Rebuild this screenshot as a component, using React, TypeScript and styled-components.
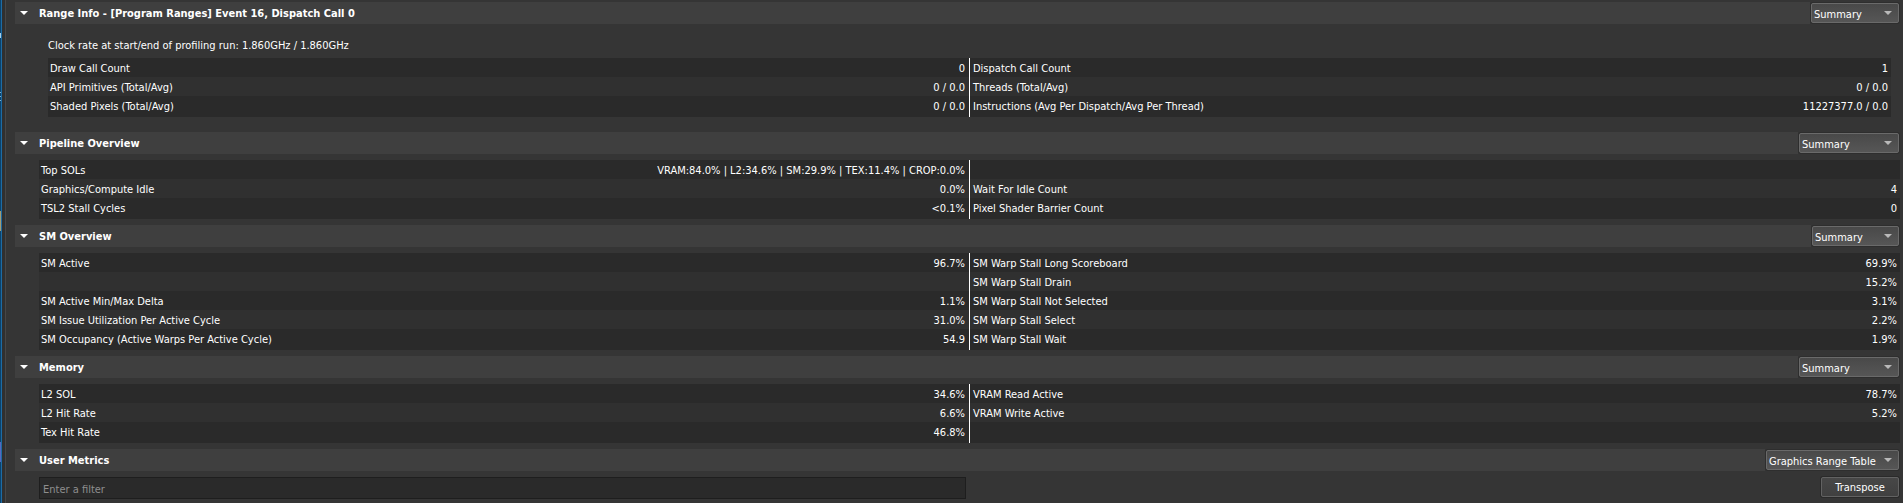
import React, { useId, useState } from "react";
import styled, { createGlobalStyle } from "styled-components";

const GlobalStyle = createGlobalStyle`
  * { box-sizing: border-box; }
  body {
    margin: 0;
    background: #353535;
    color: #fff;
    font-family: "DejaVu Sans Condensed", "DejaVu Sans", sans-serif;
    font-size: 11px;
    line-height: 19px;
  }
`;

const Window = styled.div`
  display: flex;
  min-height: 100vh;
`;

const Strip = styled.div`
  flex: none;
  width: 2px;
  border-right: 1px solid #1d6ca5;
  background: linear-gradient(
    #0b426b 0 33px, #a9cfe8 33px 38px, #0b426b 38px 92px, #7fb0d0 92px 93px,
    #0b426b 93px 96px, #7fb0d0 96px 97px, #0b426b 97px 100px, #7fb0d0 100px 101px,
    #0b426b 101px 211px, #a39c75 211px 231px, #0b426b 231px 442px,
    #5868c0 442px 462px, #0b426b 462px
  );
`;

const Gutter = styled.div`
  flex: none;
  width: 4px;
  border-right: 1px solid #474747;
  background: #303030;
`;

const Main = styled.main`
  flex: 1;
  min-width: 0;
  display: flex;
  flex-direction: column;
  gap: 6px;
  padding: 2px 3px 4px 9px;
`;

const Header = styled.header`
  display: flex;
  align-items: center;
  height: 22px;
  padding-right: 1px;
`;

const Toggle = styled.button`
  flex: 1;
  display: flex;
  align-items: center;
  gap: 11px;
  height: 22px;
  margin-right: 1px;
  padding: 2px 5px 0;
  border: 0;
  background: #3f3f3f;
  color: #fff;
  font: inherit;
  font-weight: 700;
  text-align: left;
  cursor: pointer;
`;

const ToggleArrow = styled.svg<{ $open: boolean }>`
  width: 8px;
  height: 4px;
  margin-bottom: 2px;
  transform: ${(p) => (p.$open ? "none" : "rotate(-90deg)")};
`;

const Title = styled.h2`
  margin: 0;
  font-size: 11px;
  line-height: 20px;
`;

const SelectBox = styled.div<{ $width: number }>`
  position: relative;
  flex: none;
  width: ${(p) => p.$width}px;
  height: 20px;
`;

const Select = styled.select`
  appearance: none;
  width: 100%;
  height: 20px;
  padding: 1px 18px 0 2px;
  border: 1px solid #6a6a6a;
  border-radius: 2px;
  background: linear-gradient(#494949, #565656);
  box-shadow: 0 0 0 1px #2e2e2e;
  color: #fff;
  font: inherit;
`;

const SelectArrow = styled.svg`
  position: absolute;
  top: 8px;
  right: 7px;
  width: 8px;
  height: 4px;
  pointer-events: none;
`;

const Panel = styled.div<{ $inset?: boolean }>`
  padding: ${(p) => (p.$inset ? "6px 9px 9px 33px" : "0 0 0 24px")};
`;

const Note = styled.p`
  margin: 0 0 3px;
`;

const Metrics = styled.table`
  width: 100%;
  table-layout: fixed;
  border-collapse: collapse;
  line-height: 17px;
`;

const Row = styled.tr`
  height: 19px;
  background: #2a2a2a;
  &:nth-child(even) { background: #303030; }
  &:last-child { height: 21px; }
`;

const Label = styled.th`
  padding: 2px 0 0 2px;
  font-weight: 400;
  text-align: left;
  vertical-align: top;
  white-space: nowrap;
  &:nth-child(3) {
    padding-left: 3px;
    border-left: 1px solid #fff;
  }
`;

const Value = styled.td`
  padding: 2px 3px 0;
  text-align: right;
  vertical-align: top;
  white-space: nowrap;
  &:nth-child(2) { padding-right: 4px; }
`;

const FilterBar = styled.div`
  display: grid;
  grid-template-columns: 1fr 1fr;
  align-items: start;
  padding: 0 1px 0 24px;
`;

const Filter = styled.input`
  height: 22px;
  margin-right: 3px;
  padding: 3px 3px 0;
  border: 1px solid #1e1e1e;
  background: #2a2a2a;
  color: #fff;
  font: inherit;
  line-height: 16px;
  &::placeholder { color: #8e8e8e; opacity: 1; }
`;

const Button = styled.button`
  justify-self: end;
  width: 78px;
  height: 20px;
  padding: 0;
  border: 1px solid #626262;
  border-radius: 2px;
  background: linear-gradient(#474747, #404040);
  box-shadow: 0 0 0 1px #2a2a2a;
  color: #fff;
  font: inherit;
`;

type MetricRow = [string, string, string, string];

interface SectionProps {
  title: string;
  view: string;
  viewWidth: number;
  children: React.ReactNode;
}

function Section({ title, view, viewWidth, children }: SectionProps) {
  const [open, setOpen] = useState(true);
  const id = useId();
  return (
    <>
      <Header>
        <Toggle aria-expanded={open} aria-controls={id} onClick={() => setOpen(!open)}>
          <ToggleArrow $open={open} viewBox="0 0 8 4" aria-hidden="true">
            <path d="M0 0h8L4 4z" fill="#fff" />
          </ToggleArrow>
          <Title>{title}</Title>
        </Toggle>
        <SelectBox $width={viewWidth}>
          <Select aria-label={`${title} view`} defaultValue={view}>
            <option>{view}</option>
          </Select>
          <SelectArrow viewBox="0 0 8 4" aria-hidden="true">
            <path d="M0 0h8L4 4z" fill="#b9b9b9" />
          </SelectArrow>
        </SelectBox>
      </Header>
      <div id={id} hidden={!open}>{children}</div>
    </>
  );
}

function MetricTable({ rows }: { rows: MetricRow[] }) {
  return (
    <Metrics>
      <tbody>
        {rows.map(([a, av, b, bv], i) => (
          <Row key={i}>
            <Label scope="row">{a}</Label>
            <Value>{av}</Value>
            <Label scope="row">{b}</Label>
            <Value>{bv}</Value>
          </Row>
        ))}
      </tbody>
    </Metrics>
  );
}

const rangeInfo: MetricRow[] = [
  ["Draw Call Count", "0", "Dispatch Call Count", "1"],
  ["API Primitives (Total/Avg)", "0 / 0.0", "Threads (Total/Avg)", "0 / 0.0"],
  ["Shaded Pixels (Total/Avg)", "0 / 0.0", "Instructions (Avg Per Dispatch/Avg Per Thread)", "11227377.0 / 0.0"],
];

const pipeline: MetricRow[] = [
  ["Top SOLs", "VRAM:84.0% | L2:34.6% | SM:29.9% | TEX:11.4% | CROP:0.0%", "", ""],
  ["Graphics/Compute Idle", "0.0%", "Wait For Idle Count", "4"],
  ["TSL2 Stall Cycles", "<0.1%", "Pixel Shader Barrier Count", "0"],
];

const sm: MetricRow[] = [
  ["SM Active", "96.7%", "SM Warp Stall Long Scoreboard", "69.9%"],
  ["", "", "SM Warp Stall Drain", "15.2%"],
  ["SM Active Min/Max Delta", "1.1%", "SM Warp Stall Not Selected", "3.1%"],
  ["SM Issue Utilization Per Active Cycle", "31.0%", "SM Warp Stall Select", "2.2%"],
  ["SM Occupancy (Active Warps Per Active Cycle)", "54.9", "SM Warp Stall Wait", "1.9%"],
];

const memory: MetricRow[] = [
  ["L2 SOL", "34.6%", "VRAM Read Active", "78.7%"],
  ["L2 Hit Rate", "6.6%", "VRAM Write Active", "5.2%"],
  ["Tex Hit Rate", "46.8%", "", ""],
];

export default function App() {
  return (
    <>
      <GlobalStyle />
      <Window>
        <Strip />
        <Gutter />
        <Main>
          <Section title="Range Info - [Program Ranges] Event 16, Dispatch Call 0" view="Summary" viewWidth={88}>
            <Panel $inset>
              <Note>Clock rate at start/end of profiling run: 1.860GHz / 1.860GHz</Note>
              <MetricTable rows={rangeInfo} />
            </Panel>
          </Section>
          <Section title="Pipeline Overview" view="Summary" viewWidth={100}>
            <Panel><MetricTable rows={pipeline} /></Panel>
          </Section>
          <Section title="SM Overview" view="Summary" viewWidth={87}>
            <Panel><MetricTable rows={sm} /></Panel>
          </Section>
          <Section title="Memory" view="Summary" viewWidth={100}>
            <Panel><MetricTable rows={memory} /></Panel>
          </Section>
          <Section title="User Metrics" view="Graphics Range Table" viewWidth={133}>
            <FilterBar>
              <Filter type="text" aria-label="Filter metrics" placeholder="Enter a filter" />
              <Button type="button">Transpose</Button>
            </FilterBar>
          </Section>
        </Main>
      </Window>
    </>
  );
}
